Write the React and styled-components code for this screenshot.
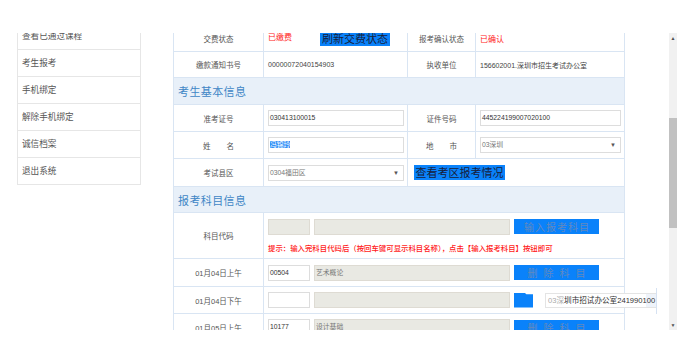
import React from "react";
import styled, { createGlobalStyle } from "styled-components";

const Global = createGlobalStyle`
  html, body { margin: 0; padding: 0; background: #fff; }
  body { font-family: "Liberation Sans", "Noto Sans CJK SC", sans-serif; }
  * { box-sizing: border-box; }
`;

const Page = styled.div`
  width: 678px;
  height: 363px;
  padding-top: 33px;
  overflow: hidden;
`;

const Viewport = styled.div`
  display: flex;
  height: 297px;
`;

const Content = styled.div`
  flex: 1;
  overflow: hidden;
  position: relative;
`;

const Inner = styled.div`
  display: flex;
  align-items: flex-start;
  margin-top: -11px;
  padding-left: 17px;
`;

const Sidebar = styled.ul`
  list-style: none;
  margin: 0;
  padding: 0;
  width: 124px;
  border: 1px solid #e6e6e6;
  border-bottom: none;
`;

const SideItem = styled.li`
  height: 27px;
  line-height: 26px;
  border-bottom: 1px solid #e6e6e6;
  padding-left: 4px;
  font-size: 8.6px;
  color: #555;
`;

const Main = styled.div`
  margin-left: 32px;
  margin-top: 3px;
  position: relative;
`;

const Table = styled.table`
  border-collapse: collapse;
  table-layout: fixed;
  width: 451px;
`;

const Tr = styled.tr`
  height: ${(p) => p.$h}px;
`;

const Cell = styled.td`
  border: 1px solid #d9e5f3;
  padding: 0 0 0 4px;
  font-size: 7px;
  color: #444;
  vertical-align: middle;
  white-space: nowrap;
  overflow: hidden;
`;

const Label = styled(Cell)`
  text-align: center;
  padding: 0;
  font-size: 7.5px;
  color: #555;
  word-spacing: ${(p) => p.$ws || 0}px;
`;

const Section = styled.td`
  border: 1px solid #d9e5f3;
  background: #e8f0f9;
  color: #3f86c6;
  font-size: 11px;
  padding-left: 4px;
  letter-spacing: 0.4px;
  font-family: "Noto Sans CJK SC", sans-serif;
`;

const Red = styled.span`
  display: inline-block;
  width: ${(p) => p.$w || 0}px;
  color: #ff2222;
  font-size: 8px;
`;

const BlueBtn = styled.span`
  display: inline-block;
  height: 15px;
  line-height: 15px;
  background: #0a82fa;
  color: ${(p) => (p.$muted ? "#6289bf" : "#17203a")};
  font-size: ${(p) => p.$fs || 11}px;
  letter-spacing: ${(p) => p.$ls || 0}px;
  width: ${(p) => p.$w}px;
  text-align: center;
  padding-left: ${(p) => p.$ls || 0}px;
  vertical-align: middle;
  font-family: "Noto Sans CJK SC", sans-serif;
`;

const Input = styled.span`
  display: inline-block;
  vertical-align: middle;
  width: ${(p) => p.$w}px;
  height: 16px;
  line-height: 14px;
  border: 1px solid ${(p) => (p.$grey ? "#dedbd3" : "#dddddd")};
  background: ${(p) => (p.$grey ? "#e9e9e3" : "#fff")};
  color: ${(p) => (p.$dim ? "#777" : "#333")};
  font-size: 6.8px;
  padding-left: 1px;
  margin-right: 4px;
  position: relative;
`;

const Arrow = styled.span`
  position: absolute;
  right: 4px;
  top: 0;
  font-size: 6px;
  color: #555;
`;

const Selected = styled.span`
  background: #3390f7;
  color: #fff;
`;

const Flex = styled.div`
  display: flex;
  align-items: center;
`;

const Hint = styled.div`
  margin-top: 7px;
  color: #ff1a1a;
  font-size: 7.4px;
  font-weight: 500;
  font-family: "Noto Sans CJK SC", sans-serif;
`;

const Stub = styled.span`
  display: inline-block;
  width: 19px;
  height: 15px;
  background: #0a82fa;
  clip-path: polygon(0 0, 55% 0, 65% 12%, 100% 12%, 100% 100%, 0 100%);
`;

const Pop = styled.div`
  position: absolute;
  left: 372px;
  top: 268px;
  width: 112px;
  height: 15px;
  border: 1px solid #e4e4e4;
  background: linear-gradient(to right, #fff 91%, #eef3fa 91%);
  font-size: 7.6px;
  line-height: 13px;
  padding-left: 2px;
  color: #333;
  white-space: nowrap;
  &::after {
    content: "";
    position: absolute;
    right: -1px;
    top: -6px;
    height: 26px;
    border-right: 1px solid #d6e2f2;
  }
`;

const Faint = styled.span`
  color: #aaa;
`;

const Scrollbar = styled.div`
  width: 8px;
  margin-right: 1px;
  background: #f1f1f1;
  display: flex;
  flex-direction: column;
  align-items: center;
`;

const ScrollArrow = styled.div`
  height: 10px;
  font-size: 5px;
  line-height: 10px;
  color: #505050;
`;

const Track = styled.div`
  flex: 1;
  width: 100%;
  padding-top: 75px;
`;

const Thumb = styled.div`
  height: 110px;
  background: #c1c1c1;
`;

const sideItems = ["查看已通过课程", "考生报考", "手机绑定", "解除手机绑定", "诚信档案", "退出系统"];

export default function App() {
  return (
    <Page>
      <Global />
      <Viewport>
        <Content>
          <Inner>
            <Sidebar>
              {sideItems.map((t) => (
                <SideItem key={t}>{t}</SideItem>
              ))}
            </Sidebar>
            <Main>
              <Table>
                <colgroup>
                  <col style={{ width: 90 }} />
                  <col style={{ width: 144 }} />
                  <col style={{ width: 68 }} />
                  <col style={{ width: 149 }} />
                </colgroup>
                <tbody>
                  <Tr $h={26}>
                    <Label>交费状态</Label>
                    <Cell>
                      <Red $w={52}>已缴费</Red>
                      <BlueBtn $w={70}>刷新交费状态</BlueBtn>
                    </Cell>
                    <Label>报考确认状态</Label>
                    <Cell>
                      <Red>已确认</Red>
                    </Cell>
                  </Tr>
                  <Tr $h={26}>
                    <Label>缴款通知书号</Label>
                    <Cell>00000072040154903</Cell>
                    <Label>执收单位</Label>
                    <Cell>156602001.深圳市招生考试办公室</Cell>
                  </Tr>
                  <Tr $h={27}>
                    <Section colSpan={4}>考生基本信息</Section>
                  </Tr>
                  <Tr $h={27}>
                    <Label>准考证号</Label>
                    <Cell>
                      <Input $w={136}>030413100015</Input>
                    </Cell>
                    <Label>证件号码</Label>
                    <Cell>
                      <Input $w={141}>445224199007020100</Input>
                    </Cell>
                  </Tr>
                  <Tr $h={27}>
                    <Label $ws={14}>姓 名</Label>
                    <Cell>
                      <Input $w={136}>
                        <Selected>冯锦玲</Selected>
                      </Input>
                    </Cell>
                    <Label $ws={14}>地 市</Label>
                    <Cell>
                      <Input $w={141} $dim>
                        03深圳<Arrow>▼</Arrow>
                      </Input>
                    </Cell>
                  </Tr>
                  <Tr $h={28}>
                    <Label>考试县区</Label>
                    <Cell>
                      <Input $w={136} $dim>
                        0304福田区<Arrow>▼</Arrow>
                      </Input>
                    </Cell>
                    <Cell colSpan={2} style={{ paddingLeft: 6 }}>
                      <BlueBtn $w={91}>查看考区报考情况</BlueBtn>
                    </Cell>
                  </Tr>
                  <Tr $h={26}>
                    <Section colSpan={4}>报考科目信息</Section>
                  </Tr>
                  <Tr $h={46}>
                    <Label>科目代码</Label>
                    <Cell colSpan={3}>
                      <Flex>
                        <Input $w={42} $grey />
                        <Input $w={196} $grey />
                        <BlueBtn $w={85} $muted $fs={10} $ls={1}>
                          输入报考科目
                        </BlueBtn>
                      </Flex>
                      <Hint>提示：输入完科目代码后（按回车键可显示科目名称），点击【输入报考科目】按钮即可</Hint>
                    </Cell>
                  </Tr>
                  <Tr $h={28}>
                    <Label>01月04日上午</Label>
                    <Cell colSpan={3}>
                      <Flex>
                        <Input $w={42}>00504</Input>
                        <Input $w={196} $grey $dim>
                          艺术概论
                        </Input>
                        <BlueBtn $w={85} $muted $fs={10} $ls={6}>
                          删除科目
                        </BlueBtn>
                      </Flex>
                    </Cell>
                  </Tr>
                  <Tr $h={27}>
                    <Label>01月04日下午</Label>
                    <Cell colSpan={3}>
                      <Flex>
                        <Input $w={42} />
                        <Input $w={196} $grey />
                        <Stub />
                      </Flex>
                    </Cell>
                  </Tr>
                  <Tr $h={27}>
                    <Label>01月05日上午</Label>
                    <Cell colSpan={3}>
                      <Flex>
                        <Input $w={42}>10177</Input>
                        <Input $w={196} $grey $dim>
                          设计基础
                        </Input>
                        <BlueBtn $w={85} $muted $fs={10} $ls={6}>
                          删除科目
                        </BlueBtn>
                      </Flex>
                    </Cell>
                  </Tr>
                </tbody>
              </Table>
              <Pop>
                <Faint>03深</Faint>圳市招试办公室241990100
              </Pop>
            </Main>
          </Inner>
        </Content>
        <Scrollbar>
          <ScrollArrow>▲</ScrollArrow>
          <Track>
            <Thumb />
          </Track>
          <ScrollArrow>▼</ScrollArrow>
        </Scrollbar>
      </Viewport>
    </Page>
  );
}
